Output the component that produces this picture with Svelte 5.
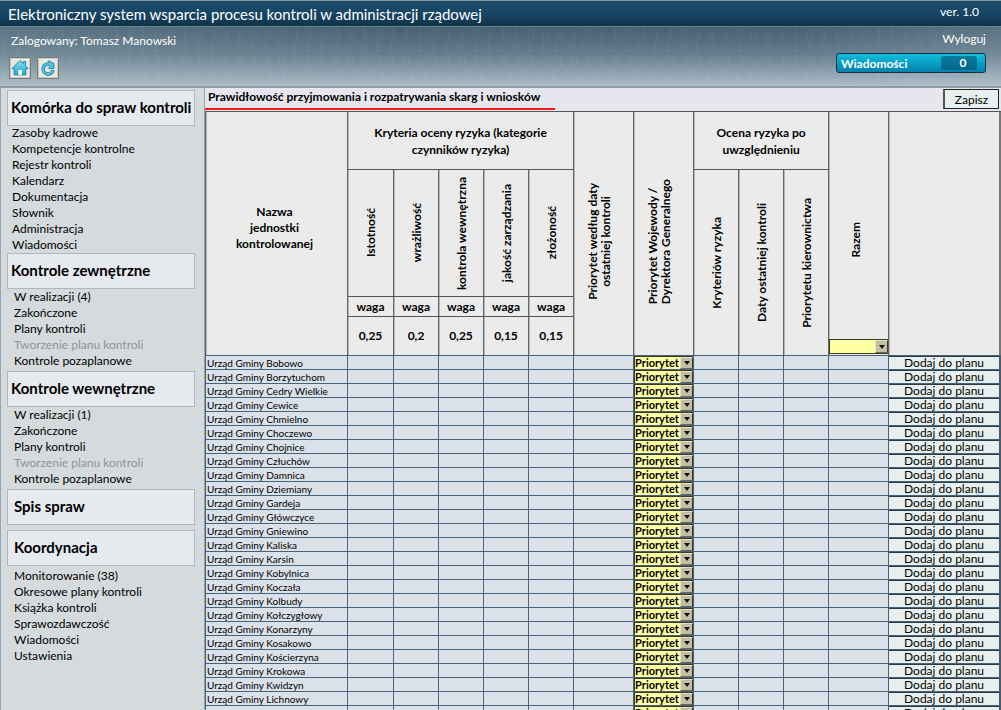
<script>
  const unit = ['Zasoby kadrowe', 'Kompetencje kontrolne', 'Rejestr kontroli', 'Kalendarz', 'Dokumentacja', 'Słownik', 'Administracja', 'Wiadomości'];
  const audits = (n) => [`W realizacji (${n})`, 'Zakończone', 'Plany kontroli', 'Tworzenie planu kontroli', 'Kontrole pozaplanowe'];
  const disabled = 'Tworzenie planu kontroli';
  const groups = [
    { title: 'Komórka do spraw kontroli', items: unit, kind: 'first' },
    { title: 'Kontrole zewnętrzne', items: audits(4), kind: 'mid' },
    { title: 'Kontrole wewnętrzne', items: audits(1), kind: 'mid' },
    { title: 'Spis spraw', items: [], kind: 'single' },
    {
      title: 'Koordynacja',
      items: ['Monitorowanie (38)', 'Okresowe plany kontroli', 'Książka kontroli', 'Sprawozdawczość', 'Wiadomości', 'Ustawienia'],
      kind: 'last'
    }
  ];
  const criteria = [
    ['Istotność', '0,25'],
    ['wrażliwość', '0,2'],
    ['kontrola wewnętrzna', '0,25'],
    ['jakość zarządzania', '0,15'],
    ['złożoność', '0,15']
  ];
  const results = ['Kryteriów ryzyka', 'Daty ostatniej kontroli', 'Priorytetu kierownictwa'];
  const places = [
    'Bobowo', 'Borzytuchom', 'Cedry Wielkie', 'Cewice', 'Chmielno', 'Choczewo', 'Chojnice', 'Człuchów', 'Damnica',
    'Dziemiany', 'Gardeja', 'Główczyce', 'Gniewino', 'Kaliska', 'Karsin', 'Kobylnica', 'Koczała', 'Kolbudy',
    'Kołczygłowy', 'Konarzyny', 'Kosakowo', 'Kościerzyna', 'Krokowa', 'Kwidzyn', 'Lichnowy', ''
  ];
  const binary = [
    '0100011011101101110001101110111011011100010110111011100011011101110001',
    '1101100101110111011101110001101110111011100011011010010001101011101001',
    '0110100111011011101101110001100110110110101101001110110111000110011011',
    '1001011010110111010110100101011010101001010010011010110101010010110101'
  ];
</script>

{#snippet arrow()}
  <span class="arrow" aria-hidden="true">
    <svg width="6" height="4" viewBox="0 0 6 4"><path d="M0 0h6L3 4z" fill="#111" /></svg>
  </span>
{/snippet}

<div class="app">
  <div class="topbar">
    <h1>Elektroniczny system wsparcia procesu kontroli w administracji rządowej</h1>
    <span class="version">ver. 1.0</span>
  </div>

  <header>
    <div class="binary" aria-hidden="true">
      {#each binary as line}<div>{line}</div>{/each}
    </div>
    <div class="left">
      <span class="user">Zalogowany: Tomasz Manowski</span>
      <div class="tools">
        <button aria-label="Strona główna">
          <svg width="18" height="18" viewBox="0 0 18 18">
            <defs>
              <linearGradient id="sky" x1="0" y1="0" x2="0" y2="1">
                <stop offset="0" stop-color="#8ce0f2" />
                <stop offset="1" stop-color="#1fa9d2" />
              </linearGradient>
            </defs>
            <path d="M9 1.5 12.3 4.6V2.6h2.2v4.1L17 9.6h-2.2v6.2H3.2V9.6H1z" fill="url(#sky)" stroke="#1585a8" stroke-width="1" stroke-linejoin="round" />
            <path d="M7.3 11h3.6v4.8H7.3z" fill="#fff" />
          </svg>
        </button>
        <button aria-label="Odśwież">
          <svg width="18" height="18" viewBox="0 0 18 18">
            <path d="M10 5.2A5 5 0 1 0 14 11.2" fill="none" stroke="#16799b" stroke-width="3.4" />
            <path d="M9.2 1.8 15 4.4V9.4H9.4L11.4 7.4 9.2 6.4z" fill="#52c6e4" stroke="#16799b" stroke-width="0.8" stroke-linejoin="round" />
            <path d="M10.6 5.3A5 5 0 1 0 13.8 11.6" fill="none" stroke="#52c6e4" stroke-width="1.9" />
          </svg>
        </button>
      </div>
    </div>
    <div class="right">
      <a class="logout" href="#wyloguj">Wyloguj</a>
      <button class="messages"><span>Wiadomości</span><span class="count">0</span></button>
    </div>
  </header>

  <div class="body">
    <nav>
      {#each groups as group}
        <section class={group.kind}>
          <h2>{group.title}</h2>
          {#if group.items.length}
            <ul>
              {#each group.items as item}
                <li><a href="#menu" class:off={item === disabled}>{item}</a></li>
              {/each}
            </ul>
          {/if}
        </section>
      {/each}
    </nav>

    <main>
      <div class="titlebar">
        <h3>Prawidłowość przyjmowania i rozpatrywania skarg i wniosków</h3>
        <button class="save">Zapisz</button>
      </div>
      <table>
        <colgroup>
          <col class="name" />
          <col class="first" />
          {#each { length: 4 } as _}<col class="narrow" />{/each}
          <col class="wide" />
          <col class="wide" />
          {#each { length: 3 } as _}<col class="narrow" />{/each}
          <col class="wide" />
          <col />
        </colgroup>
        <thead>
          <tr class="h1">
            <th rowspan="4" class="unit">Nazwa<br />jednostki<br />kontrolowanej</th>
            <th colspan="5" class="lined">Kryteria oceny ryzyka (kategorie<br />czynników ryzyka)</th>
            <th rowspan="4" class="tall"><span class="vert center">Priorytet według daty<br />ostatniej kontroli</span></th>
            <th rowspan="4" class="tall"><span class="vert">Priorytet Wojewody /<br />Dyrektora Generalnego</span></th>
            <th colspan="3" class="lined">Ocena ryzyka po<br />uwzględnieniu</th>
            <th rowspan="4" class="total">
              <div class="stack">
                <span class="vert">Razem</span>
                <span class="pick">
                  <select aria-label="Razem"><option></option></select>
                  {@render arrow()}
                </span>
              </div>
            </th>
            <th rowspan="4" class="end" aria-label="Akcje"></th>
          </tr>
          <tr class="h2">
            {#each criteria as [label]}<th class="lined"><span class="vert">{label}</span></th>{/each}
            {#each results as label}<th rowspan="3"><span class="vert">{label}</span></th>{/each}
          </tr>
          <tr class="h3">
            {#each criteria as _}<th class="lined">waga</th>{/each}
          </tr>
          <tr class="h4">
            {#each criteria as [, weight]}<th>{weight}</th>{/each}
          </tr>
        </thead>
        <tbody>
          {#each places as place}
            <tr>
              <td class="place">{place ? `Urząd Gminy ${place}` : ''}</td>
              {#each { length: 6 } as _}<td></td>{/each}
              <td>
                <span class="pick">
                  <select aria-label="Priorytet"><option>Priorytet</option></select>
                  {@render arrow()}
                </span>
              </td>
              {#each { length: 4 } as _}<td></td>{/each}
              <td class="action"><button>Dodaj do planu</button></td>
            </tr>
          {/each}
        </tbody>
      </table>
    </main>
  </div>
</div>

<style>
  :global(body) {
    margin: 0;
    overflow: hidden;
  }
  .app {
    display: flex;
    flex-direction: column;
    height: 100vh;
    overflow: hidden;
    font-family: Lato, 'Open Sans', sans-serif;
    font-size: 12px;
    color: #000;
    background: #d5dadd;
  }
  h1, h2, h3, ul { margin: 0; padding: 0; }
  a { color: inherit; text-decoration: none; }
  button, select { font: inherit; color: inherit; margin: 0; }

  .topbar {
    flex: none;
    box-sizing: border-box;
    display: flex;
    justify-content: space-between;
    align-items: center;
    height: 27px;
    padding: 0 22px 0 8px;
    border-top: 1px solid #8d959b;
    border-bottom: 1px solid #61898e;
    background: linear-gradient(#1a4a6b, #184666 50%, #123249);
    color: #fff;
  }
  h1 { font-size: 15px; font-weight: 400; line-height: 24px; }
  .version { line-height: 20px; padding-bottom: 4px; }

  header {
    flex: none;
    box-sizing: border-box;
    position: relative;
    display: flex;
    justify-content: space-between;
    height: 61px;
    padding: 5px 15px 0 9px;
    border-bottom: 2px solid #8e9ba6;
    background: linear-gradient(90deg, #b4c4cc30, #0000 40%, #0000 80%, #c8d4da28), linear-gradient(#476073, #647c8c 45%, #a6b7c2 96%, #b4c1ca);
    color: #fff;
  }
  .binary {
    position: absolute;
    inset: 0;
    overflow: hidden;
    font-family: 'Liberation Sans', sans-serif;
    font-size: 13px;
    line-height: 14px;
    letter-spacing: 7px;
    white-space: nowrap;
    color: #e4eef2;
    opacity: 0.07;
  }
  .left, .right { position: relative; display: flex; flex-direction: column; }
  .user { padding-left: 2px; line-height: 18px; }
  .tools { display: flex; gap: 6px; padding-top: 7px; }
  .tools button {
    display: grid;
    place-items: center;
    width: 22px;
    height: 22px;
    padding: 0;
    border: 1px solid #777c7b;
    background: #e7e8e0;
    box-shadow: inset 0 0 0 1px #c9cdc5;
  }
  .right { align-items: flex-end; }
  .logout { line-height: 14px; padding-bottom: 1px; }
  .messages {
    display: flex;
    justify-content: space-between;
    align-items: center;
    box-sizing: border-box;
    width: 150px;
    height: 20px;
    margin-top: 6px;
    padding: 0 8px 0 4px;
    border: 1px solid #12303f;
    border-radius: 3px;
    background: linear-gradient(#12bfdd, #079fc6 50%, #0680ac);
    color: #fff;
    font-weight: 700;
  }
  .count {
    box-sizing: border-box;
    width: 36px;
    padding-left: 8px;
    line-height: 14px;
    border-radius: 3px;
    text-align: center;
    background: linear-gradient(#067c9d, #05658c);
  }

  .body { flex: 1; min-height: 0; display: flex; }
  nav {
    flex: none;
    box-sizing: border-box;
    width: 205px;
    padding: 2px 9px 0 6px;
    border-left: 1px solid #9aa3b0;
    border-right: 1px solid #98a2ac;
  }
  h2 {
    box-sizing: border-box;
    height: 36px;
    padding-left: 3px;
    border: 1px solid #aeb6c1;
    background: #e6e9ee;
    font-size: 15px;
    line-height: 32px;
    white-space: nowrap;
  }
  ul { list-style: none; }
  li { height: 16px; line-height: 16px; padding-left: 7px; }
  .first ul { margin-top: -1px; }
  .first li { padding-left: 5px; }
  .mid ul { padding-bottom: 2px; }
  .single h2, .last h2 { padding-left: 6px; }
  .last h2 { margin-top: 5px; }
  .last ul { padding-top: 2px; }
  .off { color: #8f9496; }

  main {
    flex: 1;
    min-width: 0;
    overflow: hidden;
    background: #e6e6ee;
  }
  .titlebar {
    box-sizing: border-box;
    display: flex;
    justify-content: space-between;
    height: 23px;
    padding-right: 2px;
  }
  h3 {
    box-sizing: border-box;
    height: 22px;
    padding: 0 15px 0 3px;
    border-bottom: 2px solid #f41818;
    font-size: 12px;
    line-height: 18px;
    white-space: nowrap;
  }
  .save {
    width: 56px;
    height: 20px;
    padding: 0;
    margin-top: 1px;
    border: 1px solid #222;
    border-left: 2px solid #555;
    background: #e7f0ee;
  }

  table {
    width: 100%;
    table-layout: fixed;
    border-collapse: separate;
    border-spacing: 0;
    border-top: 1px solid #555;
  }
  col.name { width: 142px; }
  col.first { width: 46px; }
  col.narrow { width: 45px; }
  col.wide { width: 60px; }
  th, td { padding: 0; box-sizing: border-box; }
  th {
    border-left: 1px solid #666;
    background: #ebebeb;
    box-shadow: inset 1px 0 #b4b4b4;
    line-height: 17px;
    white-space: nowrap;
  }
  th.unit { line-height: 16px; padding: 0 4px 12px 0; }
  th.end { border-right: 2px solid #777; }
  .lined { border-bottom: 1px solid #555; }
  .tall { padding: 16px 10px 0 0; }
  .h1 { height: 58px; }
  .h2 { height: 127px; }
  .h3 { height: 20px; }
  .h4 { height: 38px; }
  .h4 th { line-height: 15px; padding-bottom: 2px; }
  .vert {
    display: inline-block;
    writing-mode: vertical-rl;
    transform: rotate(180deg);
    line-height: 13px;
    text-align: left;
    vertical-align: middle;
  }
  .vert.center { text-align: center; }
  .total { vertical-align: bottom; }
  .stack {
    display: flex;
    flex-direction: column;
    align-items: center;
    gap: 81px;
    padding-bottom: 1px;
  }
  .stack .vert { padding-left: 6px; }
  .pick {
    display: grid;
    grid-template-columns: minmax(0, 1fr) 13px;
    box-sizing: border-box;
    width: 100%;
    height: 13px;
    border-top: 1px solid #3d3c22;
    border-left: 1px solid #3d3c22;
    background: #ffffa3;
  }
  .stack .pick { height: 15px; border-bottom: 1px solid #3d3c22; }
  .pick select {
    grid-area: 1 / 1 / 2 / 3;
    min-width: 0;
    height: 100%;
    padding: 0;
    border: 0;
    appearance: none;
    background: none;
    font-size: 11px;
    font-weight: 700;
    line-height: 12px;
  }
  .arrow {
    grid-area: 1 / 2;
    display: grid;
    place-items: center;
    box-sizing: border-box;
    border: 1px solid #e5e2c8;
    border-right-color: #3d3c22;
    border-bottom-color: #6c6a50;
    background: #c3c0a2;
    pointer-events: none;
  }
  td {
    height: 14px;
    border-left: 1px solid #45637a;
    border-top: 1px solid #45637a;
    background: #dae1e8;
    line-height: 13px;
  }
  .place { padding-left: 1px; font-size: 10px; line-height: 12px; white-space: nowrap; }
  .action { padding-right: 2px; background: #4b5a68; }
  .action button {
    display: block;
    width: 100%;
    height: 13px;
    padding: 0;
    border: 0;
    border-top: 1px solid #2f3a42;
    background: #e7f0ee;
    line-height: 12px;
  }
</style>
